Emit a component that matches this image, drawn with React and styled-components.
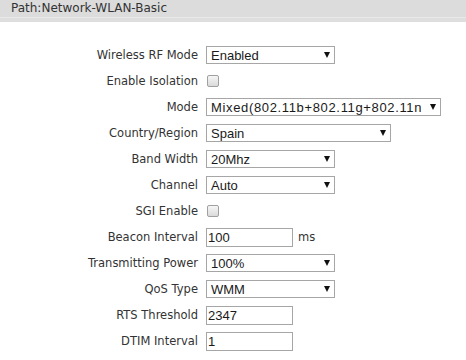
import styled, { createGlobalStyle } from "styled-components";

const GlobalStyle = createGlobalStyle`
  body {
    margin: 0;
    background: #ffffff;
    font-family: "DejaVu Sans", Verdana, sans-serif;
  }
`;

const PathBar = styled.div`
  height: 22px;
  background: linear-gradient(
    to bottom,
    #dcdcdc 0,
    #dcdcdc 17px,
    #e9e9e9 17px,
    #e9e9e9 18px,
    #dedede 18px,
    #dedede 22px
  );
  padding-left: 11px;
  font-size: 12px;
  line-height: 17px;
  color: #333333;
`;

const Form = styled.div`
  display: grid;
  grid-template-columns: 198px auto;
  grid-auto-rows: 26px;
  column-gap: 8px;
  margin-top: 20px;
`;

const Label = styled.div`
  display: flex;
  align-items: center;
  justify-content: flex-end;
  font-size: 11.5px;
  color: #333333;
  white-space: nowrap;
`;

const Cell = styled.div`
  display: flex;
  align-items: center;
  gap: 5px;
`;

const SelectBox = styled.div`
  box-sizing: border-box;
  width: ${(p) => p.$w}px;
  height: 18px;
  border: 1px solid #a6a6a6;
  background: #ffffff;
  display: flex;
  align-items: center;
  padding: 0 4px 0 4px;
  font-family: "Liberation Sans", Arial, sans-serif;
  font-size: 13px;
  color: #1a1a1a;
`;

const SelectText = styled.span`
  flex: 1;
  overflow: hidden;
  white-space: nowrap;
  letter-spacing: ${(p) => p.$spacing || "normal"};
`;

const Arrow = styled.span`
  width: 0;
  height: 0;
  margin-left: ${(p) => p.$gap || 4}px;
  border-left: 3px solid transparent;
  border-right: 3px solid transparent;
  border-top: 6px solid #111111;
`;

const TextBox = styled.div`
  box-sizing: border-box;
  width: 87px;
  height: 19px;
  border: 1px solid #a6a6a6;
  background: #ffffff;
  display: flex;
  align-items: center;
  padding-left: 1px;
  font-family: "Liberation Sans", Arial, sans-serif;
  font-size: 13px;
  color: #1a1a1a;
`;

const Check = styled.span`
  box-sizing: border-box;
  width: 12px;
  height: 12px;
  margin-left: 1px;
  border: 1px solid #a0a0a0;
  border-radius: 2px;
  background: linear-gradient(#f6f6f6, #dadada);
`;

const Unit = styled.span`
  font-size: 11.5px;
  color: #333333;
`;

const rows = [
  { label: "Wireless RF Mode", kind: "select", value: "Enabled", w: 129 },
  { label: "Enable Isolation", kind: "check" },
  {
    label: "Mode",
    kind: "select",
    value: "Mixed(802.11b+802.11g+802.11n)",
    w: 235,
    spacing: "0.65px",
    gap: 9,
  },
  { label: "Country/Region", kind: "select", value: "Spain", w: 185 },
  { label: "Band Width", kind: "select", value: "20Mhz", w: 129 },
  { label: "Channel", kind: "select", value: "Auto", w: 129 },
  { label: "SGI Enable", kind: "check" },
  { label: "Beacon Interval", kind: "text", value: "100", unit: "ms" },
  { label: "Transmitting Power", kind: "select", value: "100%", w: 129 },
  { label: "QoS Type", kind: "select", value: "WMM", w: 129 },
  { label: "RTS Threshold", kind: "text", value: "2347" },
  { label: "DTIM Interval", kind: "text", value: "1" },
];

const Control = ({ row }) => {
  if (row.kind === "check") return <Check />;
  if (row.kind === "text")
    return (
      <>
        <TextBox>{row.value}</TextBox>
        {row.unit && <Unit>{row.unit}</Unit>}
      </>
    );
  return (
    <SelectBox $w={row.w}>
      <SelectText $spacing={row.spacing}>{row.value}</SelectText>
      <Arrow $gap={row.gap} />
    </SelectBox>
  );
};

const App = () => {
  return (
    <>
      <GlobalStyle />
      <PathBar>Path:Network-WLAN-Basic</PathBar>
      <Form>
        {rows.map((row) => (
          <>
            <Label key={row.label + "-l"}>{row.label}</Label>
            <Cell key={row.label + "-c"}>
              <Control row={row} />
            </Cell>
          </>
        ))}
      </Form>
    </>
  );
};

export default App;
